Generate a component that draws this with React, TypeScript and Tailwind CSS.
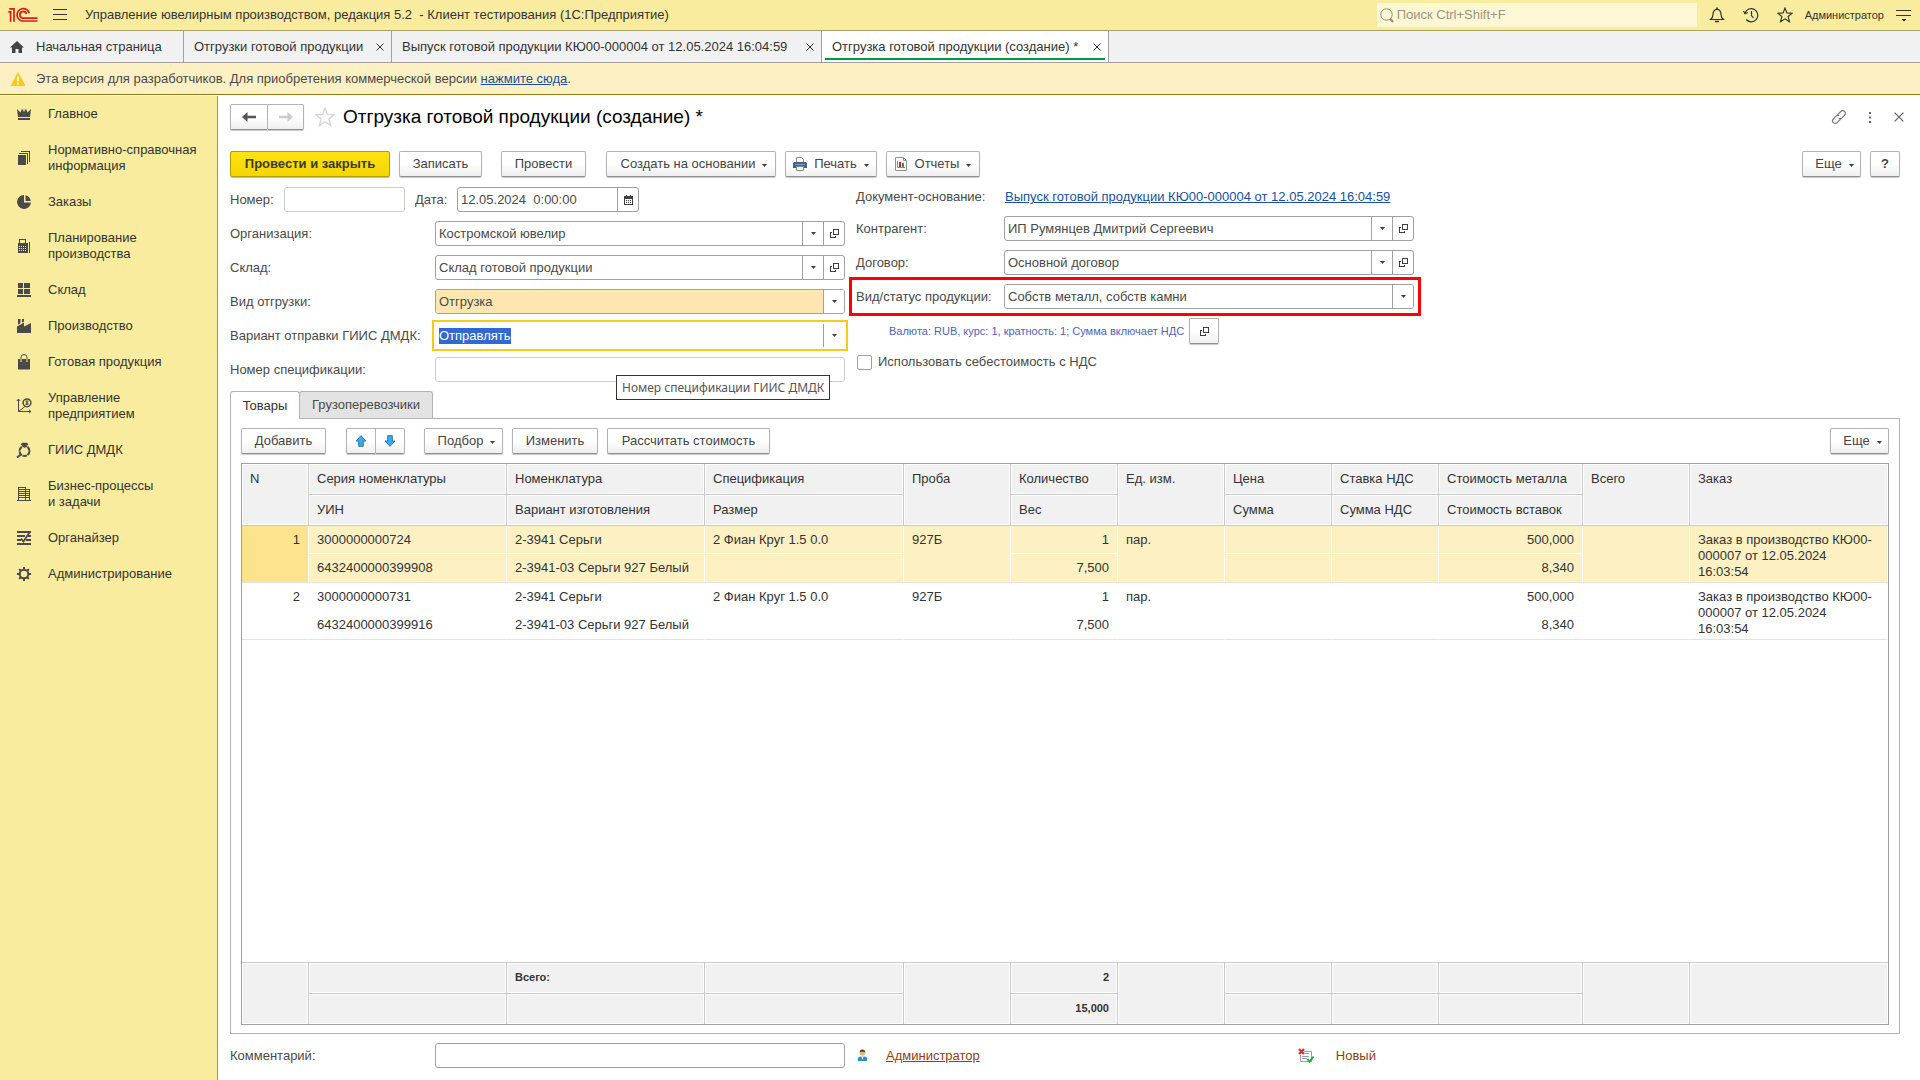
import { ReactNode, useEffect, useRef } from "react";
import clsx from "clsx";

interface IconProps {
  className?: string;
}

const Caret = ({ className }: IconProps) => (
  <svg width="5" height="3" viewBox="0 0 5 3" className={clsx("shrink-0", className)}>
    <path d="M0 0H5L2.5 3Z" fill="#3f3f3f" />
  </svg>
);

const OpenIcon = () => (
  <svg width="9" height="9" viewBox="0 0 9 9" fill="none" stroke="#3f3f3f" shapeRendering="crispEdges">
    <path d="M3.5 0.5H8.5V5.5H3.5Z" />
    <path d="M2 3.5H0.5V8.5H5.5V7" />
  </svg>
);

const LogoIcon = () => (
  <svg width="30" height="16" viewBox="0 0 30 16" fill="none" stroke="#d91e18" strokeWidth="1.7">
    <path d="M0.3 4.8H2.6V14.8" />
    <path d="M1.2 1.8H6V14.8" />
    <path d="M21.2 6.2A6.2 6.2 0 1 0 15.6 14H29.5" />
    <path d="M18.4 7A3.3 3.3 0 1 0 15.6 11.1H29.5" />
  </svg>
);

const CrossIcon = ({ className }: IconProps) => (
  <svg width="8" height="8" viewBox="0 0 8 8" stroke="currentColor" className={className}>
    <path d="M0.5 0.5L7.5 7.5M7.5 0.5L0.5 7.5" />
  </svg>
);

const StarIcon = ({ size, color }: { size: number; color: string }) => (
  <svg width={size} height={size} viewBox="0 0 16 16" fill="none" stroke={color} strokeWidth="1.1">
    <path d="M8 1L9.9 5.9L15.2 6.2L11.1 9.5L12.5 14.8L8 11.8L3.5 14.8L4.9 9.5L0.8 6.2L6.1 5.9Z" />
  </svg>
);

const CrownIcon = () => (
  <svg width="16" height="16" viewBox="0 0 16 16" fill="#4a4a4a">
    <path d="M1 3L4.5 6.5L6 2.5L7.5 6L8 2L8.5 6L10 2.5L11.5 6.5L15 3L14 11H2Z" />
    <path d="M2 12H14V14H2Z" />
  </svg>
);

const BooksIcon = () => (
  <svg width="16" height="16" viewBox="0 0 16 16" fill="#4a4a4a" shapeRendering="crispEdges">
    <path d="M2 5H10V15H2Z" />
    <path d="M3 3H12V14H11V4H3Z" />
    <path d="M5 1H14V12H13V2H5Z" />
  </svg>
);

const PieIcon = () => (
  <svg width="16" height="16" viewBox="0 0 16 16" fill="#4a4a4a">
    <path d="M8 1A7 7 0 1 0 15 8.5H8Z" />
    <path d="M9.5 1.2A7 7 0 0 1 14.8 7H9.5Z" />
  </svg>
);

const CalculatorIcon = () => (
  <svg width="16" height="16" viewBox="0 0 16 16" fill="none" stroke="#4a4a4a" shapeRendering="crispEdges">
    <path d="M3.5 1.5H9.5V5.5H3.5Z" />
    <path d="M2 5H12V15H2Z" fill="#4a4a4a" stroke="none" />
    <path d="M3 8.5H11M3 10.5H11M3 12.5H11" stroke="#faec9e" strokeDasharray="1 1" />
    <path d="M13.5 4V15" />
  </svg>
);

const WarehouseIcon = () => (
  <svg width="16" height="16" viewBox="0 0 16 16" fill="#4a4a4a" shapeRendering="crispEdges">
    <path d="M2 1H7V6H2ZM8 1H14V6H8ZM2 7H7V12H2ZM8 7H14V12H8ZM1 13H15V15H1Z" />
  </svg>
);

const FactoryIcon = () => (
  <svg width="16" height="16" viewBox="0 0 16 16" fill="#4a4a4a">
    <path d="M1 15V8.5L8 4.5V8.5L15 5V15Z" />
    <path d="M2 1H4.5V5L2 6.8ZM6 1H8V3.5L6 4.5Z" />
  </svg>
);

const BagIcon = () => (
  <svg width="16" height="16" viewBox="0 0 16 16" fill="#4a4a4a">
    <path d="M2 5H14V15.5H2Z" />
    <path d="M5 8V3.5A3 3 0 0 1 11 3.5V8" fill="none" stroke="#4a4a4a" />
    <path d="M5 5V8M11 5V8" stroke="#faec9e" />
  </svg>
);

const ChartIcon = () => (
  <svg width="16" height="16" viewBox="0 0 16 16" fill="none" stroke="#4a4a4a">
    <path d="M2.5 1.5V13.5H14.5M0.8 3L2.5 1L4.2 3M13 11.8L15 13.5L13 15.2" />
    <path d="M2.5 13.5L9 8.5" />
    <circle cx="11" cy="4.8" r="3.9" strokeWidth="1.5" />
    <path d="M9.5 3.2H12.5M9.5 6H12.5M11 2.5V7" strokeWidth="1.3" />
  </svg>
);

const RingIcon = () => (
  <svg width="16" height="16" viewBox="0 0 16 16" fill="none" stroke="#4a4a4a" strokeWidth="2">
    <circle cx="8.5" cy="9" r="5" strokeDasharray="4.5 0.7" />
    <path d="M4.8 12.5L1 15.5" />
    <path d="M6 0.8H11L12.3 2.5L8.5 6L4.7 2.5Z" fill="#4a4a4a" stroke="none" />
  </svg>
);

const BuildingIcon = () => (
  <svg width="16" height="16" viewBox="0 0 16 16" fill="none" stroke="#4a4a4a" shapeRendering="crispEdges">
    <path d="M2.5 14V1.5H9.5V14M9.5 3.5H13.5V14M1 14.5H15" />
    <path d="M3 3.5H9M3 5.5H9M3 7.5H9M3 9.5H9M3 11.5H9M10 5.5H13M10 7.5H13M10 9.5H13M10 11.5H13" />
  </svg>
);

const OrganizerIcon = () => (
  <svg width="16" height="16" viewBox="0 0 16 16" fill="none" stroke="#4a4a4a" strokeWidth="2">
    <path d="M1 2H15M1 6H9M12 6H15M1 10H5M10 10H15M1 14H15" />
    <path d="M13.5 2.5L7.5 11.5L5 8.5" strokeWidth="1.8" />
  </svg>
);

const GearIcon = () => (
  <svg width="16" height="16" viewBox="0 0 16 16" fill="none" stroke="#4a4a4a" strokeWidth="2">
    <circle cx="8" cy="8" r="4.3" />
    <path d="M8 1V3.5M8 12.5V15M1 8H3.5M12.5 8H15M3.1 3.1L4.8 4.8M11.2 11.2L12.9 12.9M12.9 3.1L11.2 4.8M4.8 11.2L3.1 12.9" />
  </svg>
);

const CalendarIcon = () => (
  <svg width="9" height="10" viewBox="0 0 9 10" fill="#3f3f3f" shapeRendering="crispEdges">
    <path d="M0 1H9V4H0ZM0 4H1V10H0ZM8 4H9V10H8ZM0 9H9V10H0ZM2 0H3V1H2ZM6 0H7V1H6Z" />
    <path d="M2 5H3V6H2ZM4 5H5V6H4ZM6 5H7V6H6ZM2 7H3V8H2ZM4 7H5V8H4ZM6 7H7V8H6Z" />
  </svg>
);

const PrinterIcon = () => (
  <svg width="14" height="14" viewBox="0 0 14 14">
    <path d="M3.5 5V0.5H8.5L10.5 2.5V5" fill="#fff" stroke="#7c8fa0" />
    <path d="M1 5H13L14 6V11H0V6Z" fill="#3f658a" />
    <path d="M2 7.5H12" stroke="#7fa3c4" />
    <path d="M3.5 9.5H10.5V13.5H3.5Z" fill="#fff" stroke="#7c8fa0" />
  </svg>
);

const ReportIcon = () => (
  <svg width="12" height="14" viewBox="0 0 12 14">
    <path d="M0.5 0.5H8.5L11.5 3.5V13.5H0.5Z" fill="#fff" stroke="#8494a3" />
    <path d="M8.5 0.5V3.5H11.5" fill="none" stroke="#8494a3" />
    <path d="M2.5 4V10.5H10" fill="none" stroke="#8a8a8a" />
    <path d="M4 5H6V10H4Z" fill="#e01b1b" />
    <path d="M7 6H9V10H7Z" fill="#27a02c" />
  </svg>
);

const UserIcon = () => (
  <svg width="11" height="13" viewBox="0 0 12 14">
    <circle cx="6" cy="4.2" r="3" fill="#f0b869" />
    <path d="M2.8 4C2.8 -0.6 9.2 -0.6 9.2 4L8 2.8H4Z" fill="#4a3a24" />
    <path d="M1 13V10Q1 8 4 8H8Q11 8 11 10V13Z" fill="#2b90cf" />
    <path d="M4.6 8H7.4L6 11.5Z" fill="#fff" />
  </svg>
);

const StatusIcon = () => (
  <svg width="16" height="15" viewBox="0 0 16 15" fill="none">
    <path d="M6 3.5H13.5V13.5H2.5V7" stroke="#93a2b3" />
    <path d="M7 5.5H11M4 8.5H11M4 10.5H9" stroke="#93a2b3" />
    <path d="M1 1L6 6M6 1L1 6" stroke="#d92c2c" strokeWidth="2.2" />
    <path d="M9.5 11L11.5 13.5L15.5 8.5" stroke="#1fae3a" strokeWidth="2" />
  </svg>
);

const MoveArrow = ({ down }: { down?: boolean }) => (
  <svg width="12" height="12" viewBox="0 0 12 12" className={down ? "rotate-180" : ""}>
    <path d="M6 0.7L11 6H8.3V11.3H3.7V6H1Z" fill="#3fa9ea" stroke="#1d7dba" />
  </svg>
);

const MENU_DATA = [
  { label: "Главное", icon: <CrownIcon /> },
  { label: "Нормативно-справочная информация", icon: <BooksIcon /> },
  { label: "Заказы", icon: <PieIcon /> },
  { label: "Планирование производства", icon: <CalculatorIcon /> },
  { label: "Склад", icon: <WarehouseIcon /> },
  { label: "Производство", icon: <FactoryIcon /> },
  { label: "Готовая продукция", icon: <BagIcon /> },
  { label: "Управление предприятием", icon: <ChartIcon /> },
  { label: "ГИИС ДМДК", icon: <RingIcon /> },
  { label: "Бизнес-процессы\nи задачи", icon: <BuildingIcon /> },
  { label: "Органайзер", icon: <OrganizerIcon /> },
  { label: "Администрирование", icon: <GearIcon /> },
];

const ITEMS = [
  {
    n: 1,
    series: "3000000000724",
    uin: "6432400000399908",
    item: "2-3941 Серьги",
    variant: "2-3941-03 Серьги 927 Белый",
    spec: "2 Фиан Круг 1.5 0.0",
    probe: "927Б",
    qty: "1",
    weight: "7,500",
    unit: "пар.",
    metal: "500,000",
    stones: "8,340",
    order: "Заказ в производство КЮ00-000007 от 12.05.2024 16:03:54",
  },
  {
    n: 2,
    series: "3000000000731",
    uin: "6432400000399916",
    item: "2-3941 Серьги",
    variant: "2-3941-03 Серьги 927 Белый",
    spec: "2 Фиан Круг 1.5 0.0",
    probe: "927Б",
    qty: "1",
    weight: "7,500",
    unit: "пар.",
    metal: "500,000",
    stones: "8,340",
    order: "Заказ в производство КЮ00-000007 от 12.05.2024 16:03:54",
  },
];

const Button = ({
  children,
  className,
  caret,
  label,
}: {
  children: ReactNode;
  className?: string;
  caret?: boolean;
  label?: string;
}) => (
  <button
    type="button"
    aria-label={label}
    className={clsx(
      "flex h-[26px] shrink-0 items-center justify-center rounded-[2px] border border-[#b3b3b3] border-b-[#8f8f8f] bg-linear-to-b from-white from-50% to-[#efefef] text-[#444] shadow-[0_1px_1px_#c8c8c8]",
      className,
    )}
  >
    {children}
    {caret && <Caret className="mt-[3px] ml-[7px]" />}
  </button>
);

const FieldButton = ({ children, label }: { children: ReactNode; label: string }) => (
  <button
    type="button"
    aria-label={label}
    className="flex w-[21px] shrink-0 items-center justify-center border-l border-[#a0a0a0]"
  >
    {children}
  </button>
);

const LookupField = ({ id, value }: { id: string; value: string }) => (
  <div className="flex h-[25px] min-w-0 flex-1 rounded-[3px] border border-[#a0a0a0] bg-white">
    <input id={id} defaultValue={value} className="min-w-0 flex-1 px-[3px] outline-none" />
    <FieldButton label="Выбрать">
      <Caret />
    </FieldButton>
    <FieldButton label="Открыть">
      <OpenIcon />
    </FieldButton>
  </div>
);

const SelectField = ({ id, value, className }: { id: string; value: string; className?: string }) => (
  <div className="relative flex h-[25px] min-w-0 flex-1 overflow-hidden rounded-[3px] border border-[#a0a0a0] bg-white">
    <select id={id} className={clsx("w-full appearance-none px-[3px] outline-none", className)}>
      <option>{value}</option>
    </select>
    <span className="pointer-events-none absolute inset-y-0 right-0 flex w-[21px] items-center justify-center border-l border-[#a0a0a0] bg-white">
      <Caret />
    </span>
  </div>
);

const Label = ({ htmlFor, children, className }: { htmlFor: string; children: ReactNode; className: string }) => (
  <label htmlFor={htmlFor} className={clsx("shrink-0 whitespace-nowrap", className)}>
    {children}
  </label>
);

const TopBar = () => (
  <header className="flex h-[31px] items-center border-b border-[#aba25f] bg-[#faec9e] pl-2 text-[#333]">
    <LogoIcon />
    <button type="button" aria-label="Меню" className="ml-[15px]">
      <svg width="14" height="12" viewBox="0 0 14 12" stroke="#333" shapeRendering="crispEdges">
        <path d="M0 0.5H14M0 5.5H14M0 10.5H14" />
      </svg>
    </button>
    <div className="ml-[18px] whitespace-pre">
      Управление ювелирным производством, редакция 5.2  - Клиент тестирования (1С:Предприятие)
    </div>
    <div className="ml-auto flex h-6 w-80 items-center bg-[#fdf7d6] pl-[3px]">
      <svg width="14" height="15" viewBox="0 0 14 15" fill="none" stroke="#8f8b78">
        <circle cx="6.5" cy="6.5" r="5.7" />
        <path d="M10 10.5L13 14" strokeWidth="2" />
      </svg>
      <input
        aria-label="Поиск"
        placeholder="Поиск Ctrl+Shift+F"
        className="min-w-0 flex-1 pl-[3px] outline-none placeholder:text-[#9b9680]"
      />
    </div>
    <button type="button" aria-label="Уведомления" className="ml-3">
      <svg width="16" height="16" viewBox="0 0 16 16" fill="none" stroke="#333" strokeWidth="1.2">
        <path d="M1.5 12.5H14.5Q12 10.5 12 7.5Q12 3 8 2.2Q4 3 4 7.5Q4 10.5 1.5 12.5Z" />
        <path d="M8 0.5V2M6 14.5H10" strokeWidth="1.6" />
      </svg>
    </button>
    <button type="button" aria-label="История" className="ml-[18px]">
      <svg width="16" height="16" viewBox="0 0 16 16" fill="none" stroke="#333" strokeWidth="1.2">
        <path d="M2 6A6.6 6.6 0 1 1 3.2 12.5" />
        <path d="M0.5 4L2 6.8L4.8 5.5M8.5 4V8.5L10.5 11" />
      </svg>
    </button>
    <button type="button" aria-label="Избранное" className="ml-[18px]">
      <StarIcon size={16} color="#333" />
    </button>
    <button type="button" className="ml-3 text-[11px]">
      Администратор
    </button>
    <button type="button" aria-label="Настройки" className="mr-[9px] ml-3">
      <svg width="15" height="13" viewBox="0 0 15 13" stroke="#333" shapeRendering="crispEdges">
        <path d="M0 1.5H15M0 6.5H15" />
        <path d="M5 10H10L7.5 12.5Z" fill="#333" stroke="none" />
      </svg>
    </button>
  </header>
);

const WindowTab = ({ title, className, active }: { title: string; className: string; active?: boolean }) => (
  <div
    className={clsx(
      "relative flex shrink-0 items-center justify-between border-r border-[#a0a0a0] pr-[7px] pl-[10px] text-[#333]",
      active && "bg-white",
      className,
    )}
  >
    <button type="button">{title}</button>
    <button type="button" aria-label="Закрыть вкладку">
      <CrossIcon />
    </button>
    {active && <span className="absolute inset-x-[3px] bottom-[2px] h-[2px] bg-[#009646]" />}
  </div>
);

const Sidebar = () => (
  <nav className="mt-px flex w-[218px] shrink-0 flex-col border-r border-[#9e9462] bg-[#faec9e] text-[#333]">
    {MENU_DATA.map((link) => (
      <a key={link.label} href="#" className="flex items-center py-[10px] pr-[10px] pl-4 leading-4">
        <span className="w-8 shrink-0">{link.icon}</span>
        <span className="whitespace-pre-line">{link.label}</span>
      </a>
    ))}
  </nav>
);

const headCell =
  "border-r border-b border-[#c9c9c9] bg-[#f1f1f1] px-2 text-left align-top font-normal leading-[15px] pt-[7px] shadow-[inset_0_0_0_1px_#fff]";
const footCell =
  "border-r border-b border-[#c9c9c9] bg-[#f1f1f1] px-2 align-top text-[11px] leading-[13px] font-bold pt-2 shadow-[inset_0_0_0_1px_#fff]";

const GoodsTable = () => (
  <div className="flex flex-1 border border-[#a0a0a0]">
    <table className="w-full table-fixed border-separate border-spacing-0 text-[#333]">
      <colgroup>
        <col className="w-[67px]" />
        <col className="w-[198px]" />
        <col className="w-[198px]" />
        <col className="w-[199px]" />
        <col className="w-[107px]" />
        <col className="w-[107px]" />
        <col className="w-[107px]" />
        <col className="w-[107px]" />
        <col className="w-[107px]" />
        <col className="w-[144px]" />
        <col className="w-[107px]" />
        <col />
      </colgroup>
      <thead>
        <tr className="h-[31px]">
          <th rowSpan={2} className={headCell}>N</th>
          <th className={headCell}>Серия номенклатуры</th>
          <th className={headCell}>Номенклатура</th>
          <th className={headCell}>Спецификация</th>
          <th rowSpan={2} className={headCell}>Проба</th>
          <th className={headCell}>Количество</th>
          <th rowSpan={2} className={headCell}>Ед. изм.</th>
          <th className={headCell}>Цена</th>
          <th className={headCell}>Ставка НДС</th>
          <th className={headCell}>Стоимость металла</th>
          <th rowSpan={2} className={headCell}>Всего</th>
          <th rowSpan={2} className={clsx(headCell, "border-r-0")}>Заказ</th>
        </tr>
        <tr className="h-[31px]">
          <th className={headCell}>УИН</th>
          <th className={headCell}>Вариант изготовления</th>
          <th className={headCell}>Размер</th>
          <th className={headCell}>Вес</th>
          <th className={headCell}>Сумма</th>
          <th className={headCell}>Сумма НДС</th>
          <th className={headCell}>Стоимость вставок</th>
        </tr>
      </thead>
      {ITEMS.map((row) => {
        const active = row.n === 1;
        const base = clsx("border-r border-white px-2 align-top pt-[6px] leading-4", active && "bg-[#fdf1c4]");
        const top = clsx(base, "border-b");
        const bottom = clsx(base, "border-b border-b-[#e3e3e3]");
        return (
          <tbody key={row.n}>
            <tr className="h-7">
              <td rowSpan={2} className={clsx(bottom, "text-right", active && "!bg-[#fde38b]")}>{row.n}</td>
              <td className={top}>{row.series}</td>
              <td className={top}>{row.item}</td>
              <td className={top}>{row.spec}</td>
              <td rowSpan={2} className={bottom}>{row.probe}</td>
              <td className={clsx(top, "text-right")}>{row.qty}</td>
              <td rowSpan={2} className={bottom}>{row.unit}</td>
              <td className={top} />
              <td className={top} />
              <td className={clsx(top, "text-right")}>{row.metal}</td>
              <td rowSpan={2} className={bottom} />
              <td rowSpan={2} className={bottom}>{row.order}</td>
            </tr>
            <tr className="h-[29px]">
              <td className={bottom}>{row.uin}</td>
              <td className={clsx(bottom, "whitespace-nowrap")}>{row.variant}</td>
              <td className={bottom} />
              <td className={clsx(bottom, "text-right")}>{row.weight}</td>
              <td className={bottom} />
              <td className={bottom} />
              <td className={clsx(bottom, "text-right")}>{row.stones}</td>
            </tr>
          </tbody>
        );
      })}
      {/* empty area takes all the free height */}
      <tbody className="h-full">
        <tr className="h-full">
          <td colSpan={12} className="border-b border-[#c9c9c9]">&nbsp;</td>
        </tr>
      </tbody>
      <tfoot>
        <tr className="h-[31px]">
          <td rowSpan={2} className={clsx(footCell, "border-b-0")} />
          <td className={footCell} />
          <td className={footCell}>Всего:</td>
          <td className={footCell} />
          <td rowSpan={2} className={clsx(footCell, "border-b-0")} />
          <td className={clsx(footCell, "text-right")}>2</td>
          <td rowSpan={2} className={clsx(footCell, "border-b-0")} />
          <td className={footCell} />
          <td className={footCell} />
          <td className={footCell} />
          <td rowSpan={2} className={clsx(footCell, "border-b-0")} />
          <td rowSpan={2} className={clsx(footCell, "border-r-0 border-b-0")} />
        </tr>
        <tr className="h-[30px]">
          <td className={clsx(footCell, "border-b-0")} />
          <td className={clsx(footCell, "border-b-0")} />
          <td className={clsx(footCell, "border-b-0")} />
          <td className={clsx(footCell, "border-b-0 text-right")}>15,000</td>
          <td className={clsx(footCell, "border-b-0")} />
          <td className={clsx(footCell, "border-b-0")} />
          <td className={clsx(footCell, "border-b-0")} />
        </tr>
      </tfoot>
    </table>
  </div>
);

const DocumentForm = () => {
  const variantRef = useRef<HTMLInputElement>(null);

  useEffect(() => {
    variantRef.current?.focus();
    variantRef.current?.select();
  }, []);

  return (
    <form className="flex gap-[11px]">
      <div className="flex w-[615px] flex-col gap-[9px]">
        <div className="flex h-[25px] items-center">
          <Label htmlFor="number" className="w-[54px]">Номер:</Label>
          <input id="number" className="h-[25px] w-[121px] rounded-[3px] border border-[#cfcfcf] px-[3px] outline-none" />
          <Label htmlFor="date" className="ml-[10px] w-[42px]">Дата:</Label>
          <div className="flex h-[25px] w-[182px] rounded-[3px] border border-[#a0a0a0]">
            <input id="date" defaultValue="12.05.2024  0:00:00" className="min-w-0 flex-1 px-[3px] outline-none" />
            <FieldButton label="Календарь">
              <CalendarIcon />
            </FieldButton>
          </div>
        </div>
        <div className="flex items-center">
          <Label htmlFor="org" className="w-[205px]">Организация:</Label>
          <LookupField id="org" value="Костромской ювелир" />
        </div>
        <div className="flex items-center">
          <Label htmlFor="store" className="w-[205px]">Склад:</Label>
          <LookupField id="store" value="Склад готовой продукции" />
        </div>
        <div className="flex items-center">
          <Label htmlFor="kind" className="w-[205px]">Вид отгрузки:</Label>
          <SelectField id="kind" value="Отгрузка" className="bg-[#ffe6b0]" />
        </div>
        <div className="flex items-center">
          <Label htmlFor="variant" className="w-[205px]">Вариант отправки ГИИС ДМДК:</Label>
          <div className="flex h-[25px] min-w-0 flex-1 border border-white bg-white outline-2 outline-offset-1 outline-[#f8ca1c]">
            <input
              id="variant"
              ref={variantRef}
              defaultValue="Отправлять"
              className="min-w-0 flex-1 px-[3px] outline-none selection:bg-[#3367d1] selection:text-white"
            />
            <FieldButton label="Выбрать">
              <Caret />
            </FieldButton>
          </div>
        </div>
        <div className="relative flex items-center">
          <Label htmlFor="spec" className="w-[205px]">Номер спецификации:</Label>
          <input id="spec" className="h-[25px] min-w-0 flex-1 rounded-[3px] border border-[#cfcfcf] px-[3px] outline-none" />
          <div
            role="tooltip"
            className="absolute top-[18px] left-[386px] z-10 border border-[#333] bg-white px-[5px] font-['Noto_Sans',sans-serif] text-[12px] leading-[23px] whitespace-nowrap text-[#555]"
          >
            Номер спецификации ГИИС ДМДК
          </div>
        </div>
      </div>

      <div className="flex w-[558px] flex-col gap-[9px]">
        <div className="flex h-5 items-center">
          <span className="w-[149px] shrink-0">Документ-основание:</span>
          <a href="#" className="whitespace-nowrap text-[#1a4fa3] underline">
            Выпуск готовой продукции КЮ00-000004 от 12.05.2024 16:04:59
          </a>
        </div>
        <div className="flex items-center">
          <Label htmlFor="partner" className="w-[148px]">Контрагент:</Label>
          <LookupField id="partner" value="ИП Румянцев Дмитрий Сергеевич" />
        </div>
        <div className="flex items-center">
          <Label htmlFor="contract" className="w-[148px]">Договор:</Label>
          <LookupField id="contract" value="Основной договор" />
        </div>
        <div className="relative flex items-center">
          <Label htmlFor="status" className="w-[148px]">Вид/статус продукции:</Label>
          <SelectField id="status" value="Собств металл, собств камни" className="bg-white" />
          <span className="pointer-events-none absolute -inset-[7px] border-[3px] border-[#fe0000]" />
        </div>
        <div className="flex items-center pl-[33px]">
          <span className="w-[300px] text-[11px] whitespace-nowrap text-[#4d62c4]">
            Валюта: RUB, курс: 1, кратность: 1; Сумма включает НДС
          </span>
          <Button label="Открыть валюту" className="w-[30px]">
            <OpenIcon />
          </Button>
        </div>
        <label className="flex h-[18px] items-center gap-[6px]">
          <input
            type="checkbox"
            className="ml-px size-[15px] appearance-none rounded-[2px] border border-[#a0a0a0] bg-white"
          />
          Использовать себестоимость с НДС
        </label>
      </div>
    </form>
  );
};

export default function App() {
  return (
    <div className="flex min-h-screen flex-col bg-white font-['Liberation_Sans',Arial,sans-serif] text-[13px] leading-4 text-[#4a4a4a]">
      <TopBar />
      <div className="flex h-8 border-b border-[#a0a0a0] bg-[#f1f1f1]">
        <button type="button" className="flex w-[184px] items-center border-r border-[#a0a0a0] pl-[10px] text-[#333]">
          <svg width="14" height="12" viewBox="0 0 14 12" fill="#444" className="mr-3">
            <path d="M7 0L14 6.5H12V12H8.5V8H5.5V12H2V6.5H0Z" />
          </svg>
          Начальная страница
        </button>
        <WindowTab title="Отгрузки готовой продукции" className="w-52" />
        <WindowTab
          title="Выпуск готовой продукции КЮ00-000004 от 12.05.2024 16:04:59"
          className="w-[430px]"
        />
        <WindowTab title="Отгрузка готовой продукции (создание) *" className="w-[287px]" active />
      </div>
      <div className="flex h-8 items-center border-b border-[#96781a] bg-[#fdf1c4] pl-[10px]">
        <svg width="16" height="14" viewBox="0 0 16 14" className="mr-[10px]">
          <path d="M8 0L15.5 14H0.5Z" fill="#fcc81a" />
          <path d="M8 4.5V9.5M8 10.8V12.4" stroke="#fff" strokeWidth="1.8" />
        </svg>
        <span>
          Эта версия для разработчиков. Для приобретения коммерческой версии{" "}
          <a href="#" className="text-[#1a4fa3] underline">нажмите сюда</a>.
        </span>
      </div>

      <div className="flex flex-1">
        <Sidebar />
        <main className="flex min-w-0 flex-1 flex-col pt-[10px] pr-5 pb-3 pl-3">
          <div className="flex h-6 items-center">
            <Button label="Назад" className="w-[38px] rounded-r-none">
              <svg width="14" height="10" viewBox="0 0 14 10" fill="#555">
                <path d="M5.5 0V3.8H14V6.2H5.5V10L0 5Z" />
              </svg>
            </Button>
            <Button label="Вперед" className="w-9 rounded-l-none border-l-0">
              <svg width="14" height="10" viewBox="0 0 14 10" fill="#ccc">
                <path d="M8.5 0V3.8H0V6.2H8.5V10L14 5Z" />
              </svg>
            </Button>
            <button type="button" aria-label="В избранное" className="mr-2 ml-[11px]">
              <StarIcon size={20} color="#d5d5d5" />
            </button>
            <h1 className="text-[19px] leading-6 text-black">Отгрузка готовой продукции (создание) *</h1>
            <button type="button" aria-label="Ссылка" className="ml-auto">
              <svg width="16" height="16" viewBox="0 0 16 16" fill="none" stroke="#777" strokeWidth="1.2">
                <path d="M6.2 6.2L9.9 2.4A2.5 2.5 0 0 1 13.6 6.1L11 8.8Q9.6 10.2 7.8 9.4" />
                <path d="M9.8 9.8L6.1 13.6A2.5 2.5 0 0 1 2.4 9.9L5 7.2Q6.4 5.8 8.2 6.6" />
              </svg>
            </button>
            <button type="button" aria-label="Действия" className="mx-[22px]">
              <svg width="3" height="11" viewBox="0 0 3 11" fill="#666">
                <path d="M0 0H2V2H0ZM0 4.5H2V6.5H0ZM0 9H2V11H0Z" />
              </svg>
            </button>
            <button type="button" aria-label="Закрыть" className="-mr-1 text-[#666]">
              <CrossIcon className="size-[10px]" />
            </button>
          </div>

          <div className="mt-[22px] flex">
            <button
              type="button"
              className="h-[26px] w-40 rounded-[2px] border border-[#b59d00] bg-linear-to-b from-[#ffe313] to-[#f6d500] font-bold text-[#3a3a2a] shadow-[0_1px_1px_#b8b8b8]"
            >
              Провести и закрыть
            </button>
            <Button className="ml-[9px] w-[83px]">Записать</Button>
            <Button className="ml-[19px] w-[85px]">Провести</Button>
            <Button className="ml-5 w-[170px] pl-[6px]" caret>Создать на основании</Button>
            <Button className="ml-[9px] w-[92px]" caret>
              <span className="mr-[7px]"><PrinterIcon /></span>
              Печать
            </Button>
            <Button className="ml-[9px] w-[94px]" caret>
              <span className="mr-2"><ReportIcon /></span>
              Отчеты
            </Button>
            <Button className="ml-auto w-[59px] pl-[6px]" caret>Еще</Button>
            <Button className="ml-[9px] w-[30px] font-bold" label="Справка">?</Button>
          </div>

          <div className="mt-[10px]">
            <DocumentForm />
          </div>

          <div role="tablist" className="z-[1] mt-[9px] flex h-[27px]">
            <button type="button" role="tab" aria-selected="true" className="-mb-px w-[70px] rounded-t-[3px] border border-b-0 border-[#b3b3b3] bg-white text-[#333]">
              Товары
            </button>
            <button type="button" role="tab" aria-selected="false" className="-ml-px w-[134px] rounded-t-[3px] border border-b-0 border-[#b3b3b3] bg-[#e3e3e3]">
              Грузоперевозчики
            </button>
          </div>
          <section className="flex flex-1 flex-col border border-[#b3b3b3] px-[10px] pt-[9px] pb-[8px]">
            <div className="mb-[9px] flex">
              <Button className="w-[85px]">Добавить</Button>
              <Button className="ml-5 w-[30px] rounded-r-none" label="Переместить вверх">
                <MoveArrow />
              </Button>
              <Button className="w-[29px] rounded-l-none border-l-0" label="Переместить вниз">
                <MoveArrow down />
              </Button>
              <Button className="ml-[19px] w-[79px] pl-[6px]" caret>Подбор</Button>
              <Button className="ml-[9px] w-[86px]">Изменить</Button>
              <Button className="ml-[9px] w-[163px]">Рассчитать стоимость</Button>
              <Button className="ml-auto w-[59px] pl-[6px]" caret>Еще</Button>
            </div>
            <GoodsTable />
          </section>

          <div className="mt-[9px] flex items-center">
            <Label htmlFor="comment" className="w-[205px]">Комментарий:</Label>
            <input id="comment" className="h-[25px] w-[410px] rounded-[3px] border border-[#a0a0a0] px-[3px] outline-none" />
            <span className="ml-3 w-[29px]"><UserIcon /></span>
            <a href="#" className="text-[#963c10] underline">Администратор</a>
            <span className="ml-[318px] w-[38px]"><StatusIcon /></span>
            <span className="text-[#963c10]">Новый</span>
          </div>
        </main>
      </div>
    </div>
  );
}
